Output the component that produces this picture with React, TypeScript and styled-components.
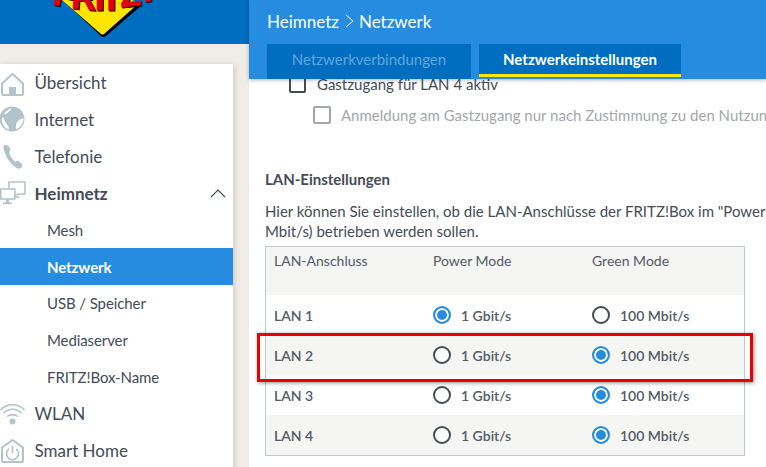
import styled, { createGlobalStyle } from "styled-components";

const GlobalStyle = createGlobalStyle`
  html, body {
    margin: 0;
    padding: 0;
    height: 100%;
    overflow: hidden;
  }
  body {
    background: #f0ede8;
    font-family: "Lato", "Noto Sans", sans-serif;
    color: #444c55;
  }
  * {
    box-sizing: border-box;
  }
`;

const Page = styled.div`
  position: relative;
  display: flex;
  width: 766px;
  height: 467px;
  overflow: hidden;
`;

const LeftColumn = styled.div`
  width: 249px;
  flex-shrink: 0;
`;

const LogoBar = styled.div`
  height: 44px;
  background: #006ec0;
  margin-bottom: 20px;
  padding-left: 49px;
`;

const Sidebar = styled.nav`
  width: 233px;
  height: 420px;
  padding-top: 0.3px;
  background: #fff;
  box-shadow: 1px 1px 6px rgba(90, 80, 60, 0.25);
`;

const NavRow = styled.div<{ $bold?: boolean }>`
  display: flex;
  align-items: center;
  height: 36.8px;
  padding-right: 7px;
  font-size: 17px;
  font-weight: ${(p) => (p.$bold ? 700 : 400)};
  color: #434b57;
`;

const NavIcon = styled.svg`
  width: 26px;
  height: 28px;
  margin-right: 8.5px;
  flex-shrink: 0;
`;

const Chevron = styled.svg`
  width: 16px;
  height: 9px;
  margin-left: auto;
`;

const SubRow = styled.div<{ $active?: boolean }>`
  display: flex;
  align-items: center;
  height: 36.8px;
  padding-left: 47px;
  font-size: 15px;
  letter-spacing: -0.1px;
  font-weight: ${(p) => (p.$active ? 700 : 400)};
  background: ${(p) => (p.$active ? "#268ce0" : "transparent")};
  color: ${(p) => (p.$active ? "#fff" : "#434b57")};
`;

const Main = styled.main`
  flex: 1;
  background: #fff;
  min-width: 0;
`;

const Header = styled.header`
  position: relative;
  z-index: 2;
  height: 79px;
  background: #268ce0;
  padding: 11px 0 0 18px;
  box-shadow: 0 1px 4px rgba(0, 0, 0, 0.3);
`;

const Crumbs = styled.div`
  display: flex;
  align-items: center;
  height: 20px;
  font-size: 17px;
  color: #fff;
`;

const CrumbArrow = styled.svg`
  width: 9px;
  height: 14px;
  margin: 0 5px 0 6px;
`;

const Tabs = styled.div`
  display: flex;
  gap: 8px;
  margin-top: 13px;
`;

const Tab = styled.div<{ $active?: boolean }>`
  display: flex;
  align-items: center;
  justify-content: center;
  height: ${(p) => (p.$active ? "33px" : "35px")};
  width: ${(p) => (p.$active ? "202px" : "204px")};
  font-size: 15px;
  padding-bottom: ${(p) => (p.$active ? "0" : "3px")};
  font-weight: ${(p) => (p.$active ? 700 : 400)};
  background: #006ec0;
  color: ${(p) => (p.$active ? "#fff" : "#62a5dc")};
  border-bottom: 3px solid ${(p) => (p.$active ? "#ffe600" : "transparent")};
`;

const Content = styled.div`
  margin-top: -6px;
  padding-left: 16px;
  width: 517px;
  white-space: nowrap;
`;

const CheckRow = styled.div<{ $nested?: boolean; $muted?: boolean }>`
  display: flex;
  align-items: center;
  height: 22px;
  margin-top: ${(p) => (p.$nested ? "9px" : "0")};
  padding-left: ${(p) => (p.$nested ? "48px" : "24px")};
  font-size: 15px;
  color: ${(p) => (p.$muted ? "#a3a7ab" : "#444c55")};
`;

const CheckBox = styled.span<{ $muted?: boolean }>`
  width: ${(p) => (p.$muted ? "18px" : "17px")};
  height: ${(p) => (p.$muted ? "18px" : "17px")};
  margin-right: ${(p) => (p.$muted ? "10px" : "11px")};
  border-radius: 2px;
  border: 2px solid ${(p) => (p.$muted ? "#a3a7ab" : "#444c55")};
  flex-shrink: 0;
`;

const Title = styled.h2`
  margin: 43px 0 0;
  font-size: 15px;
  line-height: 20px;
  font-weight: 700;
  color: #444c55;
`;

const Intro = styled.p`
  margin: 12px 0 0;
  font-size: 15px;
  line-height: 20px;
  color: #444c55;
`;

const Table = styled.div`
  width: 480px;
  margin-top: 5px;
  border: 1px solid #bcc8d2;
  white-space: nowrap;
`;

const Row = styled.div<{ $shaded?: boolean; $head?: boolean }>`
  display: grid;
  grid-template-columns: 159px 159px 1fr;
  align-items: ${(p) => (p.$head ? "start" : "center")};
  height: ${(p) => (p.$head ? "48px" : "40px")};
  padding: ${(p) => (p.$head ? "5px 0 0 8px" : "0 0 0 8px")};
  background: ${(p) => (p.$shaded ? "#f5f5f3" : "#fff")};
  font-size: 14px;
  font-weight: ${(p) => (p.$head ? 400 : 600)};
  color: #535b64;
`;

const Option = styled.label`
  display: flex;
  align-items: center;
  gap: 10px;
`;

const Radio = styled.span<{ $on?: boolean }>`
  display: block;
  width: 18px;
  height: 18px;
  border-radius: 50%;
  border: 2px solid ${(p) => (p.$on ? "#268ce0" : "#444c55")};
  background: ${(p) => (p.$on ? "#268ce0" : "#fff")};
  box-shadow: inset 0 0 0 2px #fff;
`;

const Highlight = styled.div`
  position: absolute;
  left: 257px;
  top: 333px;
  width: 496px;
  height: 49px;
  border: 3px solid #ea0000;
  box-shadow: 1px 1px 4px rgba(0, 0, 0, 0.45);
  pointer-events: none;
`;

const LogoLetters = styled.g`
  font-family: "Liberation Sans", sans-serif;
  font-weight: 700;
  font-size: 34px;
  fill: #e3000f;
  stroke: #e3000f;
  stroke-width: 1.2px;
  filter: drop-shadow(1.5px 1px 0 #000);
`;

const iconColor = "#b3c3cc";

function Logo() {
  return (
    <svg width="118" height="40" viewBox="0 0 118 40">
      <path d="M18 4 L53 37 Q55 37 57 36 L93 5 L60 -10 Z" fill="#000" />
      <path d="M13 0 L52 34 Q53 35 55 34 L90 3 L60 -10 Z" fill="#ffe600" />
      <LogoLetters>
        <text x="3" y="4" transform="rotate(12 3 4)">F</text>
        <text x="22" y="8" transform="rotate(5 22 8)">R</text>
        <text x="46" y="10">I</text>
        <text x="52" y="10">T</text>
        <text x="72" y="7" transform="rotate(-6 72 7)">Z</text>
        <text x="94" y="2" transform="rotate(-10 94 2)">!</text>
      </LogoLetters>
    </svg>
  );
}

function HomeIcon() {
  return (
    <NavIcon viewBox="0 0 26 28">
      <path
        d="M2 14.500 12.500 5 23 14.500V25a1 1 0 0 1-1 1H3a1 1 0 0 1-1-1Z"
        fill="none"
        stroke={iconColor}
        strokeWidth="2"
        strokeLinejoin="round"
      />
      <rect x="9" y="18" width="7" height="8" fill={iconColor} />
    </NavIcon>
  );
}

function GlobeIcon() {
  return (
    <NavIcon viewBox="0 0 26 28">
      <circle cx="12" cy="14" r="12.500" fill={iconColor} />
      <path
        d="M2.500 12C4 13 4.500 16 6 18.500C7.500 20 8.500 21 9 24.500C6 24 2 20 1.800 15ZM17 17C19 15.500 20.500 13.500 23.500 13.500C23.500 18 20.500 22.500 16 24.200C15.500 22 16 19 17 17ZM4 8.500C6 6 9 3.800 11.500 3.500C11 5.500 8 7 6.500 9Z"
        fill="#fff"
      />
    </NavIcon>
  );
}

function PhoneIcon() {
  return (
    <NavIcon viewBox="0 0 26 28">
      <path
        d="M5 3C4 3 3 4 3.500 6c1.500 8 6 15 13 20 1.500 1 3 1 4.500 0l1-1.500c.5-1 .5-2-.5-3l-3-2.500c-1-.5-2 0-3 1-3-2.500-5.500-6-6.500-10 1-1 1.500-1.500 1.500-3L8.500 4C8 3 6 3 5 3Z"
        fill={iconColor}
      />
    </NavIcon>
  );
}

function NetworkIcon() {
  return (
    <NavIcon viewBox="0 0 26 28">
      <path d="M9 9V3h16v12h-8" fill="none" stroke={iconColor} strokeWidth="1.600" />
      <path d="M16 15v3h3" fill="none" stroke={iconColor} strokeWidth="1.600" />
      <rect x="0.800" y="10" width="14" height="10" fill="#fff" stroke={iconColor} strokeWidth="1.600" />
      <rect x="6" y="20" width="3" height="4" fill={iconColor} />
      <rect x="3" y="23.500" width="9" height="1.600" fill={iconColor} />
    </NavIcon>
  );
}

function WifiIcon() {
  return (
    <NavIcon viewBox="0 0 26 28">
      <g fill="none" stroke={iconColor} strokeWidth="1.600">
        <path d="M0.500 10C7 3 18 3 24.500 10" />
        <path d="M3.500 13C9 8 16 8 21.500 13" />
        <path d="M7 16.500C10 14 15 14 18 16.500" />
      </g>
      <circle cx="12.500" cy="21.500" r="3" fill={iconColor} />
    </NavIcon>
  );
}

function SmartHomeIcon() {
  return (
    <NavIcon viewBox="0 0 26 28">
      <path
        d="M2 10.500 12.500 3 23 10.500V24a1 1 0 0 1-1 1H3a1 1 0 0 1-1-1Z"
        fill="none"
        stroke={iconColor}
        strokeWidth="2"
        strokeLinejoin="round"
      />
      <path d="M8.800 12a6 6 0 1 0 7.400 0" fill="none" stroke={iconColor} strokeWidth="1.600" />
      <path d="M12.500 9v7" stroke={iconColor} strokeWidth="1.600" />
    </NavIcon>
  );
}

const lanRows = [
  { name: "LAN 1", power: true },
  { name: "LAN 2", power: false },
  { name: "LAN 3", power: false },
  { name: "LAN 4", power: false },
];

export default function App() {
  return (
    <Page>
      <GlobalStyle />
      <LeftColumn>
        <LogoBar>
          <Logo />
        </LogoBar>
        <Sidebar>
          <NavRow><HomeIcon />Übersicht</NavRow>
          <NavRow><GlobeIcon />Internet</NavRow>
          <NavRow><PhoneIcon />Telefonie</NavRow>
          <NavRow $bold>
            <NetworkIcon />
            Heimnetz
            <Chevron viewBox="0 0 16 9">
              <path d="M1 8 8 1l7 7" fill="none" stroke="#444c55" strokeWidth="1.100" />
            </Chevron>
          </NavRow>
          <SubRow>Mesh</SubRow>
          <SubRow $active>Netzwerk</SubRow>
          <SubRow>USB / Speicher</SubRow>
          <SubRow>Mediaserver</SubRow>
          <SubRow>FRITZ!Box-Name</SubRow>
          <NavRow><WifiIcon />WLAN</NavRow>
          <NavRow><SmartHomeIcon />Smart Home</NavRow>
        </Sidebar>
      </LeftColumn>
      <Main>
        <Header>
          <Crumbs>
            Heimnetz
            <CrumbArrow viewBox="0 0 9 14">
              <path d="M1 1l7 6-7 6" fill="none" stroke="#fff" strokeWidth="1" />
            </CrumbArrow>
            Netzwerk
          </Crumbs>
          <Tabs>
            <Tab>Netzwerkverbindungen</Tab>
            <Tab $active>Netzwerkeinstellungen</Tab>
          </Tabs>
        </Header>
        <Content>
          <CheckRow>
            <CheckBox />
            Gastzugang für LAN 4 aktiv
          </CheckRow>
          <CheckRow $nested $muted>
            <CheckBox $muted />
            Anmeldung am Gastzugang nur nach Zustimmung zu den Nutzungsbedingungen
          </CheckRow>
          <Title>LAN-Einstellungen</Title>
          <Intro>
            Hier können Sie einstellen, ob die LAN-Anschlüsse der FRITZ!Box im "Power Mode" (1 Gbit/s)
            <br />
            Mbit/s) betrieben werden sollen.
          </Intro>
          <Table>
            <Row $head $shaded>
              <span>LAN-Anschluss</span>
              <span>Power Mode</span>
              <span>Green Mode</span>
            </Row>
            {lanRows.map((lan, i) => (
              <Row key={lan.name} $shaded={i % 2 === 1}>
                <span>{lan.name}</span>
                <Option>
                  <Radio $on={lan.power} />1 Gbit/s
                </Option>
                <Option>
                  <Radio $on={!lan.power} />100 Mbit/s
                </Option>
              </Row>
            ))}
          </Table>
        </Content>
      </Main>
      <Highlight />
    </Page>
  );
}
